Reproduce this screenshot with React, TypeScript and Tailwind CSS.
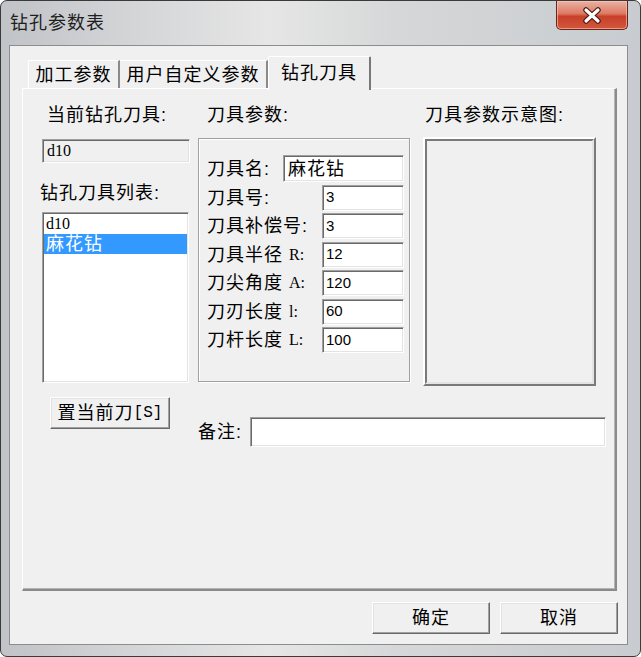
import React from "react";

const sunken =
  "border border-t-[#a0a0a0] border-l-[#a0a0a0] border-r-white border-b-white shadow-[inset_1px_1px_0_#696969,inset_-1px_-1px_0_#e3e3e3]";
const raised =
  "border border-t-white border-l-white border-r-[#696969] border-b-[#696969] shadow-[inset_-1px_-1px_0_#a0a0a0,inset_1px_1px_0_#e3e3e3] bg-[#f0f0f0]";

function CloseIcon() {
  return (
    <svg width="20" height="17" viewBox="0 0 20 17">
      <path
        d="M4 3 L16 14 M16 3 L4 14"
        stroke="#4a1a12"
        strokeWidth="5.5"
        strokeLinecap="round"
        fill="none"
      />
      <path
        d="M4 3 L16 14 M16 3 L4 14"
        stroke="#ffffff"
        strokeWidth="3.2"
        strokeLinecap="round"
        fill="none"
      />
    </svg>
  );
}

function ParamRow({
  label,
  latin,
  value,
}: {
  label: string;
  latin?: string;
  value: string;
}) {
  return (
    <div className="flex items-center h-[26px]">
      <div className="flex items-center leading-[22px]">
        <span>{label}</span>
        {latin ? (
          <span className="ml-[6px] font-['Liberation_Serif',serif] text-[16px] tracking-normal">
            {latin}
          </span>
        ) : null}
      </div>
      <div
        className={`ml-auto w-[82px] h-[26px] bg-white ${sunken} flex items-center pl-[3px] font-['Liberation_Sans',sans-serif] text-[15px] tracking-normal`}
      >
        {value}
      </div>
    </div>
  );
}

export default function App() {
  return (
    <div className="w-[641px] h-[657px] bg-white font-['Liberation_Sans','Noto_Sans_CJK_SC',sans-serif] text-[18px] tracking-[1px] text-black">
      <div className="w-[641px] h-[657px] rounded-[7px] border border-[#3a3a3a] bg-[linear-gradient(90deg,#c0c3c7_0%,#d5d6d8_22%,#e6e6e6_42%,#d6d7d8_62%,#c8ccd0_100%)] flex flex-col overflow-hidden">
        {/* Title bar */}
        <div className="h-[44px] flex items-start justify-between shrink-0">
          <div className="pl-[9px] pt-[9px] leading-[26px] text-[#1e1e1e]">钻孔参数表</div>
          <div className="mr-[12px] w-[72px] h-[29px] rounded-b-[5px] border border-t-0 border-[#6b2418] bg-[linear-gradient(180deg,#eab2a4_0%,#dc7a62_45%,#c8402a_55%,#d2573c_100%)] shadow-[inset_0_0_0_1px_rgba(255,200,190,0.6)] flex items-center justify-center">
            <CloseIcon />
          </div>
        </div>

        {/* Client area */}
        <div className="ml-[8px] mr-[12px] mb-[11px] flex-1 border border-[#8d8d8d] bg-[#f0f0f0] flex flex-col pl-[12px] pt-[10px] pr-[9px]">
          {/* Tabs */}
          <div className="flex items-end h-[32px] pl-[6px] relative z-10">
            <div className="w-[92px] h-[28px] border-l border-t border-white border-r-2 border-r-[#8a8a8a] rounded-tl-[2px] flex items-center justify-center leading-[26px]">
              加工参数
            </div>
            <div className="w-[148px] h-[28px] border-t border-white border-r-2 border-r-[#8a8a8a] flex items-center justify-center leading-[26px]">
              用户自定义参数
            </div>
            <div className="w-[103px] h-[34px] mb-[-2px] bg-[#f0f0f0] border-l border-t border-white border-r-2 border-r-[#777777] rounded-t-[2px] flex items-start justify-center pt-[3px] leading-[26px]">
              钻孔刀具
            </div>
          </div>

          {/* Tab panel */}
          <div className="w-[595px] h-[503px] border-l border-t border-white border-r-2 border-b-2 border-r-[#8a8a8a] border-b-[#8a8a8a] shadow-[inset_-1px_-1px_0_#b4b4b4] flex pl-[17px] pt-[15px]">
            {/* Left column */}
            <div className="w-[150px] flex flex-col shrink-0">
              <div className="ml-[7px] leading-[22px] h-[22px]">当前钻孔刀具:</div>
              <div
                className={`ml-[2px] mt-[13px] w-[148px] h-[24px] bg-[#f0f0f0] ${sunken} flex items-center pl-[4px] font-['Liberation_Serif',serif] text-[16px] tracking-normal`}
              >
                d10
              </div>
              <div className="mt-[19px] leading-[22px] h-[22px]">钻孔刀具列表:</div>
              <div className={`ml-[2px] mt-[8px] w-[147px] h-[171px] bg-white ${sunken} p-[1px] pt-[1px]`}>
                <div className="h-[20px] leading-[20px] pl-[2px] font-['Liberation_Serif',serif] text-[16px] tracking-normal">
                  d10
                </div>
                <div className="h-[20px] leading-[20px] pl-[2px] bg-[#3399ff] text-white">麻花钻</div>
              </div>
              <div
                className={`ml-[10px] mt-[14px] w-[120px] h-[32px] ${raised} flex items-center justify-center leading-[22px]`}
              >
                <span>置当前刀</span>
                <span className="font-['Liberation_Mono',monospace] text-[16px] tracking-normal">[S]</span>
              </div>
            </div>

            {/* Right part */}
            <div className="ml-[8px] flex flex-col">
              <div className="flex">
                {/* Middle column */}
                <div className="w-[212px] flex flex-col shrink-0">
                  <div className="ml-[9px] leading-[22px] h-[22px]">刀具参数:</div>
                  <div className="mt-[12px] w-[212px] h-[244px] border border-[#a0a0a0] shadow-[inset_1px_1px_0_#ffffff,1px_1px_0_#ffffff] flex flex-col pl-[8px] pr-[5px] pt-[16px] gap-[2.5px]">
                    <div className="flex items-center h-[27px]">
                      <span className="leading-[22px]">刀具名:</span>
                      <div
                        className={`ml-auto w-[121px] h-[27px] bg-white ${sunken} flex items-center pl-[4px] leading-[22px]`}
                      >
                        麻花钻
                      </div>
                    </div>
                    <ParamRow label="刀具号:" value="3" />
                    <ParamRow label="刀具补偿号:" value="3" />
                    <ParamRow label="刀具半径" latin="R:" value="12" />
                    <ParamRow label="刀尖角度" latin="A:" value="120" />
                    <ParamRow label="刀刃长度" latin="l:" value="60" />
                    <ParamRow label="刀杆长度" latin="L:" value="100" />
                  </div>
                </div>

                {/* Right column */}
                <div className="ml-[13px] w-[173px] flex flex-col shrink-0">
                  <div className="ml-[2px] leading-[22px] h-[22px]">刀具参数示意图:</div>
                  <div className="mt-[11px] w-[173px] h-[249px] border-2 border-t-white border-l-white border-r-[#7a7a7a] border-b-[#7a7a7a]">
                    <div className="w-full h-full border-2 border-t-[#7a7a7a] border-l-[#7a7a7a] border-r-[#e3e3e3] border-b-[#e3e3e3] bg-[#f0f0f0]" />
                  </div>
                </div>
              </div>

              {/* Remark row */}
              <div className="mt-[31px] flex items-center h-[30px]">
                <span className="leading-[22px] w-[52px]">备注:</span>
                <div className={`w-[356px] h-[30px] bg-white ${sunken}`} />
              </div>
            </div>
          </div>

          {/* Bottom buttons */}
          <div className="mt-[11px] flex justify-end gap-[10px]">
            <div className={`w-[118px] h-[32px] ${raised} flex items-center justify-center leading-[22px]`}>
              确定
            </div>
            <div className={`w-[118px] h-[32px] ${raised} flex items-center justify-center leading-[22px]`}>
              取消
            </div>
          </div>
        </div>
      </div>
    </div>
  );
}
